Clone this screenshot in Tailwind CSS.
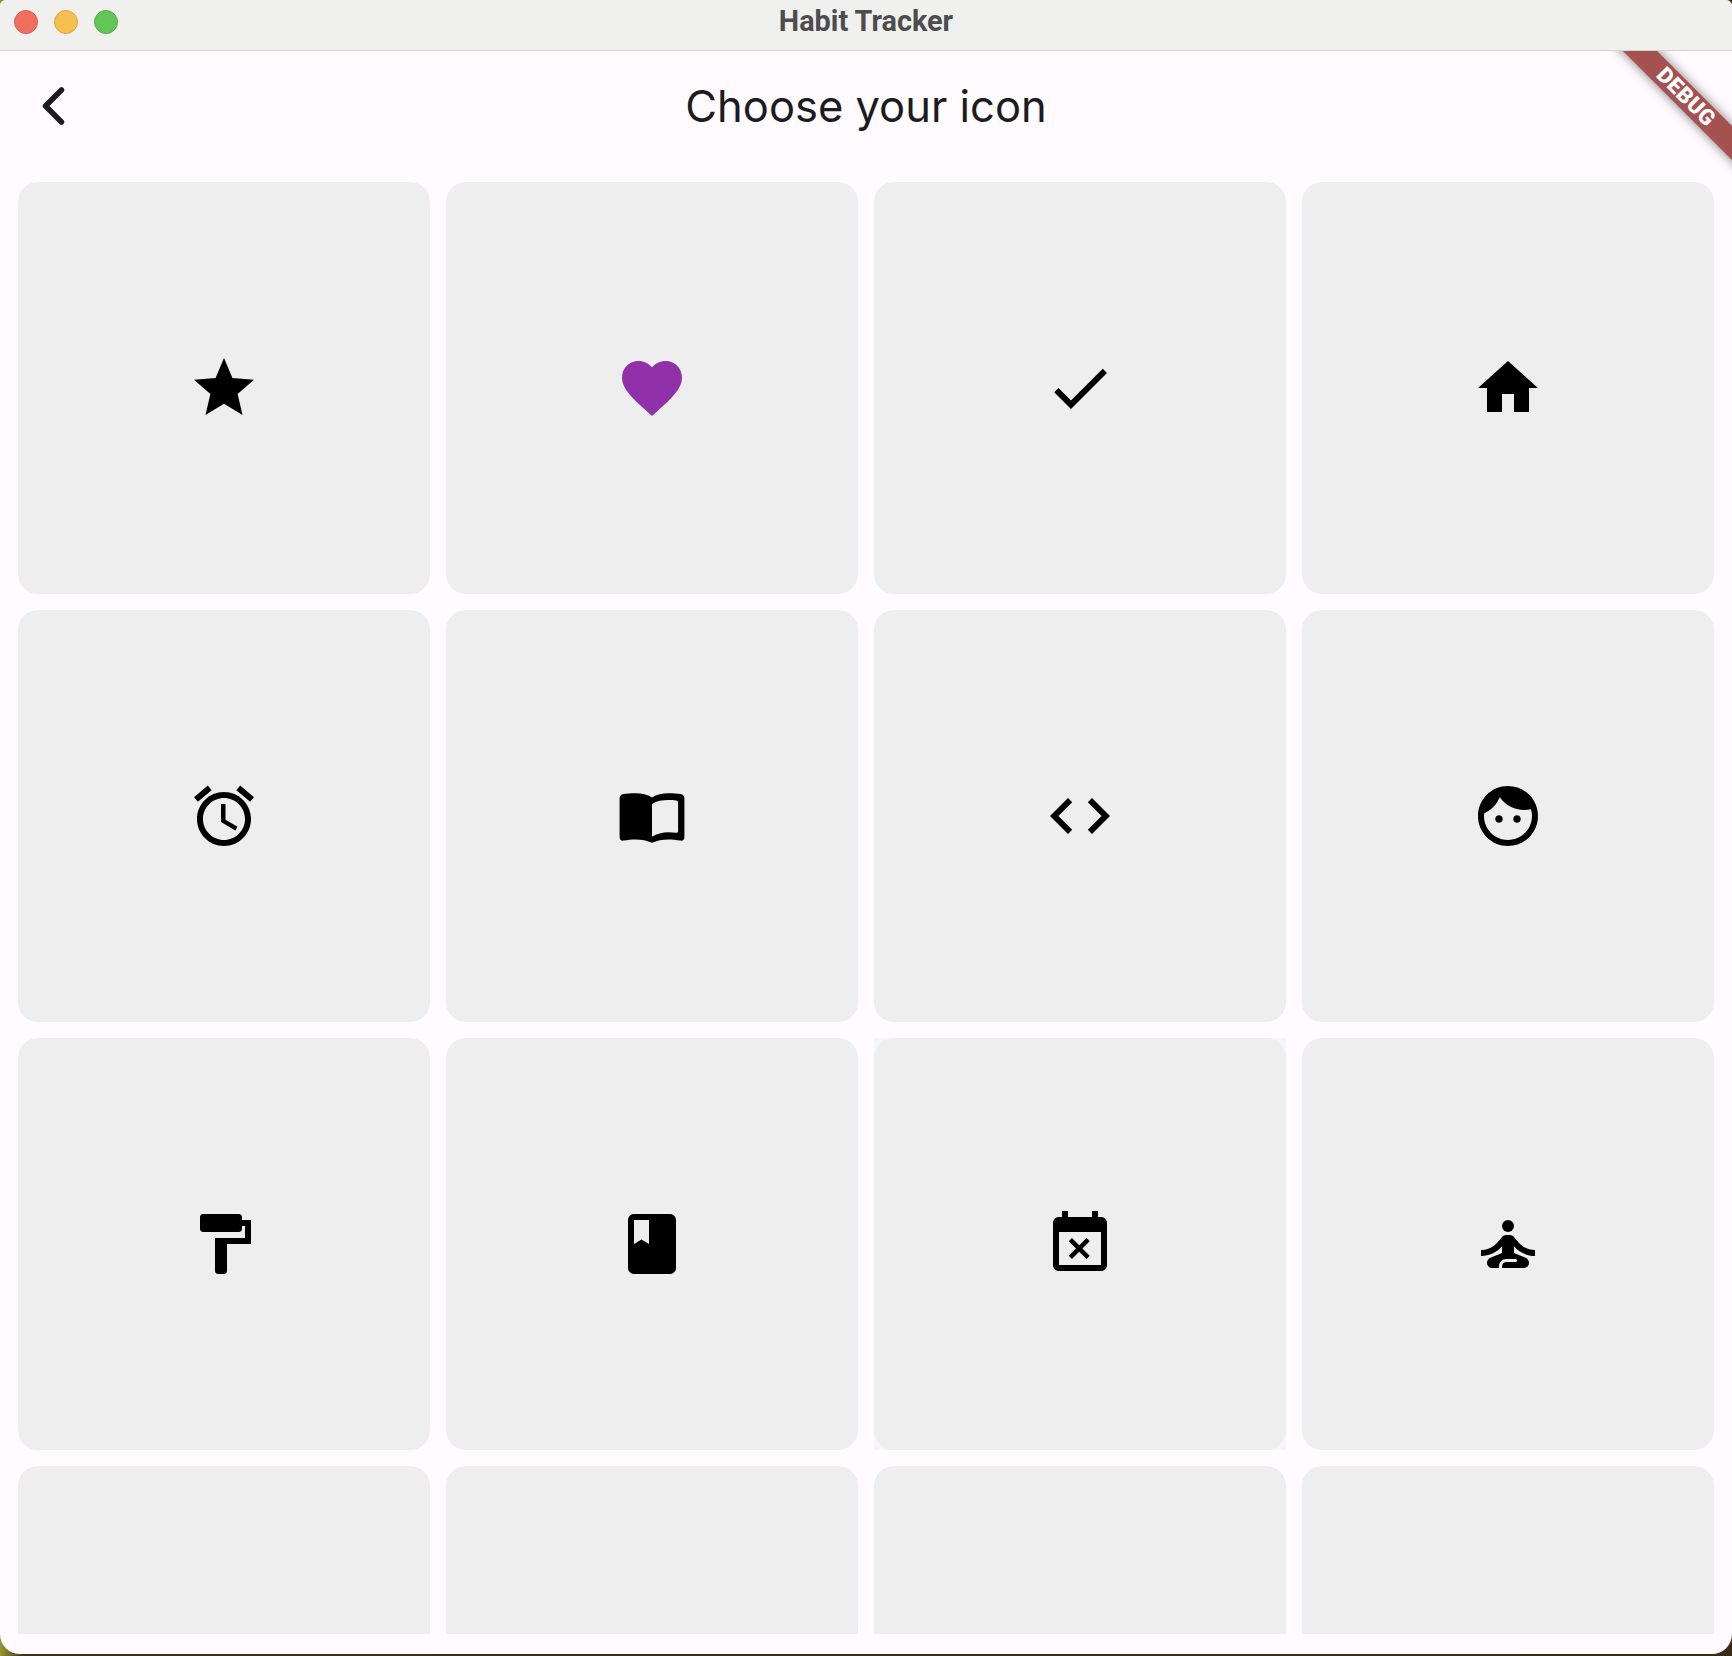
<!DOCTYPE html>
<html lang="en">
<head>
    <meta charset="UTF-8">
    <title>Habit Tracker</title>
    <script src="https://cdn.jsdelivr.net/npm/@tailwindcss/browser@4"></script>
</head>
<body class="h-[1656px] overflow-hidden bg-[linear-gradient(90deg,#9a9630_0,#3d2f1a_24px,#3a2a18_100%)] font-['Inter',sans-serif]">
    <div class="relative flex h-[1654px] flex-col overflow-hidden rounded-b-[20px] rounded-t-[6px] bg-[#fffbfe]">

        <!-- Title bar -->
        <header class="relative flex h-[51px] shrink-0 items-center justify-center border-b border-[#d3d3d1] bg-[#f0f1ee]">
            <div class="absolute left-[14px] top-[10px] flex gap-4">
                <span class="size-6 rounded-full border border-[#dc5b50] bg-[#f06d60]"></span>
                <span class="size-6 rounded-full border border-[#dea53f] bg-[#f6c04f]"></span>
                <span class="size-6 rounded-full border border-[#52ad46] bg-[#61c655]"></span>
            </div>
            <h1 class="-mt-[6px] font-['Roboto',sans-serif] text-[28.8px] font-bold text-[#4d4d4d]">Habit Tracker</h1>
        </header>

        <!-- App bar -->
        <div class="relative flex h-[131px] shrink-0 items-center justify-center pb-[19px]">
            <svg class="absolute left-[36px] top-[30px]" width="36" height="50" viewBox="0 0 36 50" fill="none" stroke="#1c1b1f" stroke-width="5.5" stroke-linecap="round" stroke-linejoin="round">
                <path d="M25.5 9L9.5 25l16 16"/>
            </svg>
            <h2 class="font-['Inter',sans-serif] text-[43.5px] font-normal leading-none text-[#1c1b1f]">Choose your icon</h2>
        </div>

        <!-- Icon grid -->
        <main class="h-[1452px] shrink-0 overflow-hidden px-[18px]">
            <div class="grid grid-cols-4 gap-4">
                <div class="flex h-[412px] items-center justify-center rounded-[20px] bg-[#eeeeee]">
                    <svg width="72" height="72" viewBox="0 0 24 24" fill="#000"><path d="M12 17.27L18.18 21l-1.64-7.03L22 9.24l-7.19-.61L12 2 9.19 8.63 2 9.24l5.46 4.73L5.82 21z"/></svg>
                </div>
                <div class="flex h-[412px] items-center justify-center rounded-[20px] bg-[#eeeeee]">
                    <svg width="72" height="72" viewBox="0 0 24 24" fill="#9131a9"><path d="M12 21.35l-1.45-1.32C5.4 15.36 2 12.28 2 8.5 2 5.42 4.42 3 7.5 3c1.74 0 3.41.81 4.5 2.09C13.09 3.81 14.76 3 16.5 3 19.58 3 22 5.42 22 8.5c0 3.78-3.4 6.86-8.55 11.54L12 21.35z"/></svg>
                </div>
                <div class="flex h-[412px] items-center justify-center rounded-[20px] bg-[#eeeeee]">
                    <svg width="72" height="72" viewBox="0 0 24 24" fill="#000"><path d="M9 16.17L4.83 12l-1.42 1.41L9 19 21 7l-1.41-1.41z"/></svg>
                </div>
                <div class="flex h-[412px] items-center justify-center rounded-[20px] bg-[#eeeeee]">
                    <svg width="72" height="72" viewBox="0 0 24 24" fill="#000"><path d="M10 20v-6h4v6h5v-8h3L12 3 2 12h3v8z"/></svg>
                </div>

                <div class="flex h-[412px] items-center justify-center rounded-[20px] bg-[#eeeeee]">
                    <svg width="72" height="72" viewBox="0 0 24 24" fill="#000"><path d="M22 5.72l-4.6-3.86-1.29 1.53 4.6 3.86L22 5.72zM7.88 3.39L6.6 1.86 2 5.71l1.29 1.53 4.59-3.85zM12.5 8H11v6l4.75 2.85.75-1.23-4-2.37V8zM12 4c-4.97 0-9 4.03-9 9s4.03 9 9 9 9-4.03 9-9-4.03-9-9-9zm0 16c-3.87 0-7-3.13-7-7s3.13-7 7-7 7 3.13 7 7-3.13 7-7 7z"/></svg>
                </div>
                <div class="flex h-[412px] items-center justify-center rounded-[20px] bg-[#eeeeee]">
                    <svg width="72" height="72" viewBox="0 0 24 24" fill="#000" fill-rule="evenodd"><path d="M1.2 6.2c0-.9.5-1.3 1.3-1.5C3.6 4.5 5 4.4 6.5 4.4c2 0 4 .4 5.5 1.4 1.5-1 3.5-1.4 5.5-1.4 1.5 0 2.9.1 4 .3.8.2 1.3.6 1.3 1.5V19c0 .9-.6 1.4-1.4 1.2-1.2-.3-2.6-.4-3.9-.4-2 0-4 .4-5.5 1.1-1.5-.7-3.5-1.1-5.5-1.1-1.3 0-2.7.1-3.9.4-.8.2-1.4-.3-1.4-1.2zM12 8c1.5-1 3.5-1.3 5.5-1.3.9 0 1.7 0 2.5.1.4 0 .7.3.7.7V17c0 .4-.3.7-.7.6-.8-.1-1.6-.2-2.5-.2-2 0-4 .5-5.5 1.5z"/></svg>
                </div>
                <div class="flex h-[412px] items-center justify-center rounded-[20px] bg-[#eeeeee]">
                    <svg width="72" height="72" viewBox="0 0 24 24" fill="#000"><path d="M9.4 16.6L4.8 12l4.6-4.6L8 6l-6 6 6 6 1.4-1.4zm5.2 0l4.6-4.6-4.6-4.6L16 6l6 6-6 6-1.4-1.4z"/></svg>
                </div>
                <div class="flex h-[412px] items-center justify-center rounded-[20px] bg-[#eeeeee]">
                    <svg width="72" height="72" viewBox="0 0 24 24" fill="#000"><path d="M9 11.75c-.69 0-1.25.56-1.25 1.25s.56 1.25 1.25 1.25 1.25-.56 1.25-1.25-.56-1.25-1.25-1.25zm6 0c-.69 0-1.25.56-1.25 1.25s.56 1.25 1.25 1.25 1.25-.56 1.25-1.25-.56-1.25-1.25-1.25zM12 2C6.48 2 2 6.48 2 12s4.48 10 10 10 10-4.48 10-10S17.52 2 12 2zm0 18c-4.41 0-8-3.59-8-8 0-.29.02-.58.05-.86 2.36-1.05 4.23-2.98 5.21-5.37C11.07 8.33 14.05 10 17.42 10c.78 0 1.53-.09 2.25-.26.21.71.33 1.47.33 2.26 0 4.41-3.59 8-8 8z"/></svg>
                </div>

                <div class="flex h-[412px] items-center justify-center rounded-[20px] bg-[#eeeeee]">
                    <svg width="72" height="72" viewBox="0 0 24 24" fill="#000"><path d="M18 4V3c0-.55-.45-1-1-1H5c-.55 0-1 .45-1 1v4c0 .55.45 1 1 1h12c.55 0 1-.45 1-1V6h1v4H9v11c0 .55.45 1 1 1h2c.55 0 1-.45 1-1v-9h8V4h-3z"/></svg>
                </div>
                <div class="flex h-[412px] items-center justify-center rounded-[20px] bg-[#eeeeee]">
                    <svg width="72" height="72" viewBox="0 0 24 24" fill="#000"><path d="M18 2H6c-1.1 0-2 .9-2 2v16c0 1.1.9 2 2 2h12c1.1 0 2-.9 2-2V4c0-1.1-.9-2-2-2zM6 4h5v8l-2.5-1.5L6 12V4z"/></svg>
                </div>
                <div class="bg-[#f6f4f6]">
                    <div class="flex h-[412px] items-center justify-center rounded-[20px] bg-[#eeeeee]">
                        <svg width="72" height="72" viewBox="0 0 24 24" fill="#000"><path d="M9.31 17l2.44-2.44L14.19 17l1.06-1.06-2.44-2.44 2.44-2.44L14.19 10l-2.44 2.44L9.31 10l-1.06 1.06 2.44 2.44-2.44 2.44L9.31 17zM19 3h-1V1h-2v2H8V1H6v2H5c-1.11 0-1.99.9-1.99 2L3 19c0 1.1.89 2 2 2h14c1.1 0 2-.9 2-2V5c0-1.1-.9-2-2-2zm0 16H5V8h14v11z"/></svg>
                    </div>
                </div>
                <div class="flex h-[412px] items-center justify-center rounded-[20px] bg-[#eeeeee]">
                    <svg width="72" height="72" viewBox="0 0 24 24" fill="#000"><circle cx="12" cy="6" r="2"/><path d="M21 16v-2c-2.24 0-4.16-.96-5.6-2.68l-1.34-1.6c-.38-.46-.94-.72-1.53-.72h-1.05c-.59 0-1.15.26-1.53.72l-1.34 1.6C7.16 13.04 5.24 14 3 14v2c2.77 0 5.19-1.17 7-3.25V15l-3.88 1.55c-.67.27-1.12.93-1.12 1.66C5 19.2 5.8 20 6.79 20H9v-.5c0-1.38 1.12-2.5 2.5-2.5h3c.28 0 .5.22.5.5s-.22.5-.5.5h-3c-.83 0-1.5.67-1.5 1.5v.5h7.21c.99 0 1.79-.8 1.79-1.79 0-.73-.45-1.39-1.12-1.66L14 15v-2.25c1.81 2.08 4.23 3.25 7 3.25z"/></svg>
                </div>

                <div class="h-[412px] rounded-[20px] bg-[#eeeeee]"></div>
                <div class="h-[412px] rounded-[20px] bg-[#eeeeee]"></div>
                <div class="h-[412px] rounded-[20px] bg-[#eeeeee]"></div>
                <div class="h-[412px] rounded-[20px] bg-[#eeeeee]"></div>
            </div>
        </main>

        <!-- Debug banner -->
        <div class="pointer-events-none absolute right-0 top-[51px] h-[180px] w-[180px] overflow-hidden">
            <div class="absolute left-[-16px] top-[34px] flex h-[24px] w-[300px] rotate-45 items-center justify-center bg-[#a5514f] shadow-[0_0_12px_rgba(0,0,0,0.5)]">
                <span class="font-['Roboto',sans-serif] text-[22px] font-black leading-none tracking-[0.5px] text-white">DEBUG</span>
            </div>
        </div>
    </div>
</body>
</html>
